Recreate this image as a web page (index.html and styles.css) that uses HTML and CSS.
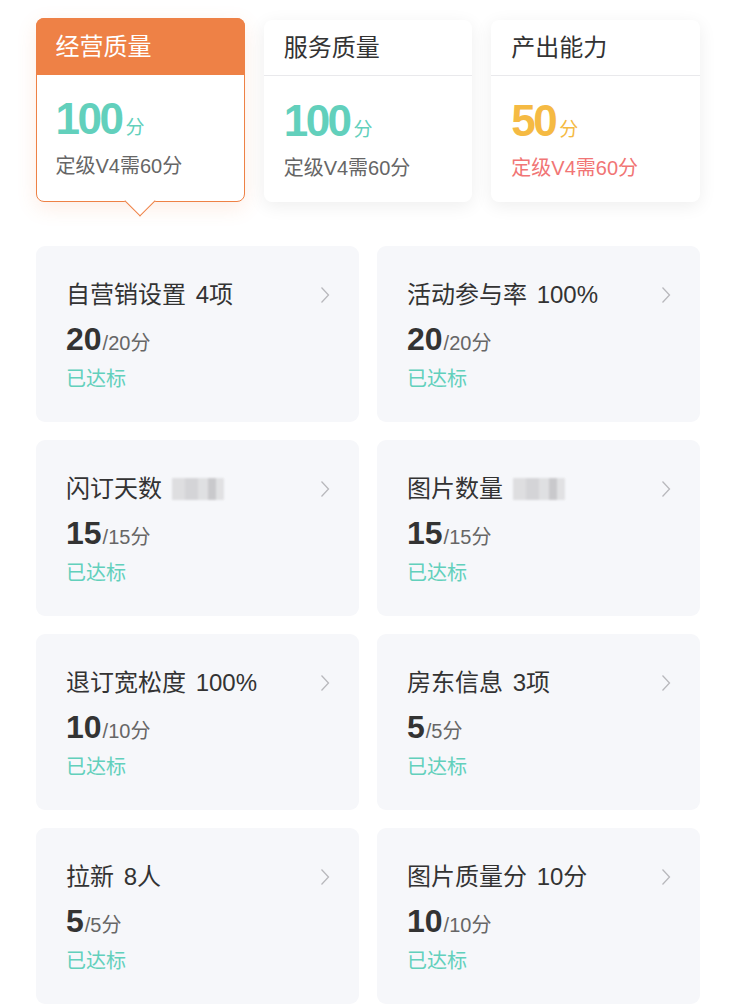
FILE: index.html
```html
<!DOCTYPE html>
<html lang="zh">
<head>
<meta charset="utf-8">
<link rel="stylesheet" href="styles.css">
</head>
<body>
<div class="page">
  <div class="summary">
    <div class="sum-card active">
      <div class="sum-head">经营质量</div>
      <div class="sum-body">
        <div class="sum-score teal"><span class="num">100</span><span class="unit">分</span></div>
        <div class="sum-note">定级V4需60分</div>
      </div>
    </div>
    <div class="sum-card">
      <div class="sum-head">服务质量</div>
      <div class="sum-body">
        <div class="sum-score teal"><span class="num">100</span><span class="unit">分</span></div>
        <div class="sum-note">定级V4需60分</div>
      </div>
    </div>
    <div class="sum-card">
      <div class="sum-head">产出能力</div>
      <div class="sum-body">
        <div class="sum-score yellow"><span class="num">50</span><span class="unit">分</span></div>
        <div class="sum-note red">定级V4需60分</div>
      </div>
    </div>
  </div>

  <div class="items">
    <div class="item">
      <div class="item-title"><span>自营销设置 4项</span><svg class="chev" viewBox="0 0 10 18"><path d="M1.5 1.5 L8.5 9 L1.5 16.5" /></svg></div>
      <div class="item-score"><b>20</b><span>/20分</span></div>
      <div class="item-status">已达标</div>
    </div>
    <div class="item">
      <div class="item-title"><span>活动参与率 100%</span><svg class="chev" viewBox="0 0 10 18"><path d="M1.5 1.5 L8.5 9 L1.5 16.5" /></svg></div>
      <div class="item-score"><b>20</b><span>/20分</span></div>
      <div class="item-status">已达标</div>
    </div>
    <div class="item">
      <div class="item-title"><span>闪订天数<i class="blur"></i></span><svg class="chev" viewBox="0 0 10 18"><path d="M1.5 1.5 L8.5 9 L1.5 16.5" /></svg></div>
      <div class="item-score"><b>15</b><span>/15分</span></div>
      <div class="item-status">已达标</div>
    </div>
    <div class="item">
      <div class="item-title"><span>图片数量<i class="blur"></i></span><svg class="chev" viewBox="0 0 10 18"><path d="M1.5 1.5 L8.5 9 L1.5 16.5" /></svg></div>
      <div class="item-score"><b>15</b><span>/15分</span></div>
      <div class="item-status">已达标</div>
    </div>
    <div class="item">
      <div class="item-title"><span>退订宽松度 100%</span><svg class="chev" viewBox="0 0 10 18"><path d="M1.5 1.5 L8.5 9 L1.5 16.5" /></svg></div>
      <div class="item-score"><b>10</b><span>/10分</span></div>
      <div class="item-status">已达标</div>
    </div>
    <div class="item">
      <div class="item-title"><span>房东信息 3项</span><svg class="chev" viewBox="0 0 10 18"><path d="M1.5 1.5 L8.5 9 L1.5 16.5" /></svg></div>
      <div class="item-score"><b>5</b><span>/5分</span></div>
      <div class="item-status">已达标</div>
    </div>
    <div class="item">
      <div class="item-title"><span>拉新 8人</span><svg class="chev" viewBox="0 0 10 18"><path d="M1.5 1.5 L8.5 9 L1.5 16.5" /></svg></div>
      <div class="item-score"><b>5</b><span>/5分</span></div>
      <div class="item-status">已达标</div>
    </div>
    <div class="item">
      <div class="item-title"><span>图片质量分 10分</span><svg class="chev" viewBox="0 0 10 18"><path d="M1.5 1.5 L8.5 9 L1.5 16.5" /></svg></div>
      <div class="item-score"><b>10</b><span>/10分</span></div>
      <div class="item-status">已达标</div>
    </div>
  </div>
</div>
</body>
</html>
```

FILE: styles.css
```css
* { box-sizing: border-box; }
html, body { margin: 0; padding: 0; background: #fff; }
body {
  font-family: "Liberation Sans", "Noto Sans CJK SC", sans-serif;
  color: #333;
  width: 738px;
  height: 1008px;
  overflow: hidden;
}

.summary {
  display: grid;
  grid-template-columns: repeat(3, 1fr);
  column-gap: 19px;
  padding: 18px 38px 0 36px;
  align-items: end;
}
.sum-card {
  position: relative;
  background: #fff;
  border-radius: 8px;
  height: 182px;
  box-shadow: 0 4px 18px rgba(0, 0, 0, 0.07);
}
.sum-card.active {
  height: 184px;
  border: 1.5px solid #ee8145;
  box-shadow: 0 6px 20px rgba(238, 129, 69, 0.14);
}
.sum-card.active::after {
  content: "";
  position: absolute;
  left: 50%;
  bottom: -11px;
  width: 21px;
  height: 21px;
  margin-left: -11px;
  background: #fff;
  border-right: 1.5px solid #ee8145;
  border-bottom: 1.5px solid #ee8145;
  transform: rotate(45deg);
}
.sum-head {
  height: 56px;
  padding-left: 20px;
  font-size: 24px;
  line-height: 56px;
  color: #333;
  border-bottom: 1px solid #e9e9ec;
}
.sum-card.active .sum-head {
  height: 57.5px;
  line-height: 57.5px;
  margin: -1.5px -1.5px 0 -1.5px;
  padding-left: 20px;
  background: #ee8146;
  color: #fff;
  border-bottom: none;
  border-radius: 8px 8px 0 0;
}
.sum-body {
  padding: 23px 0 0 20px;
}
.sum-card.active .sum-body { padding-left: 18.5px; padding-top: 22px; }
.sum-score {
  height: 44px;
  line-height: 44px;
  white-space: nowrap;
}
.sum-score .num {
  font-size: 44px;
  font-weight: bold;
  letter-spacing: -2.5px;
}
.sum-score .unit {
  font-size: 19px;
  margin-left: 4px;
}
.teal { color: #62d0bc; }
.yellow { color: #f5ba43; }
.sum-note {
  margin-top: 12px;
  font-size: 20px;
  line-height: 26px;
  color: #666;
}
.sum-note.red { color: #f17575; }

.items {
  display: grid;
  grid-template-columns: repeat(2, 1fr);
  gap: 18px;
  padding: 44px 38px 0 36px;
}
.item {
  height: 176px;
  background: #f6f7fa;
  border-radius: 9px;
  padding: 34px 29px 0 30px;
}
.item-title {
  display: flex;
  justify-content: space-between;
  align-items: center;
  height: 30px;
  font-size: 24px;
  line-height: 30px;
  color: #333;
}
.item-title span {
  display: flex;
  align-items: center;
  white-space: pre;
  word-spacing: 3px;
}
.chev {
  width: 10px;
  height: 18px;
  fill: none;
  stroke: #b8b8bc;
  stroke-width: 1.3;
}
.blur {
  display: inline-block;
  width: 52px;
  height: 22px;
  margin-left: 10px;
  background:
    linear-gradient(90deg, #dadadc 0 13px, #cfcfd2 13px 26px, #dcdcde 26px 36px, #c2c2c5 36px 44px, #dedee0 44px 52px);
  filter: blur(1.3px);
  opacity: 0.85;
}
.item-score {
  margin-top: 11px;
  height: 36px;
  line-height: 36px;
  white-space: nowrap;
}
.item-score b {
  font-size: 32px;
  font-weight: bold;
  color: #333;
}
.item-score span {
  font-size: 20px;
  color: #666;
  margin-left: 1px;
}
.item-status {
  margin-top: 10px;
  font-size: 20px;
  line-height: 24px;
  color: #62d0bc;
}
```
